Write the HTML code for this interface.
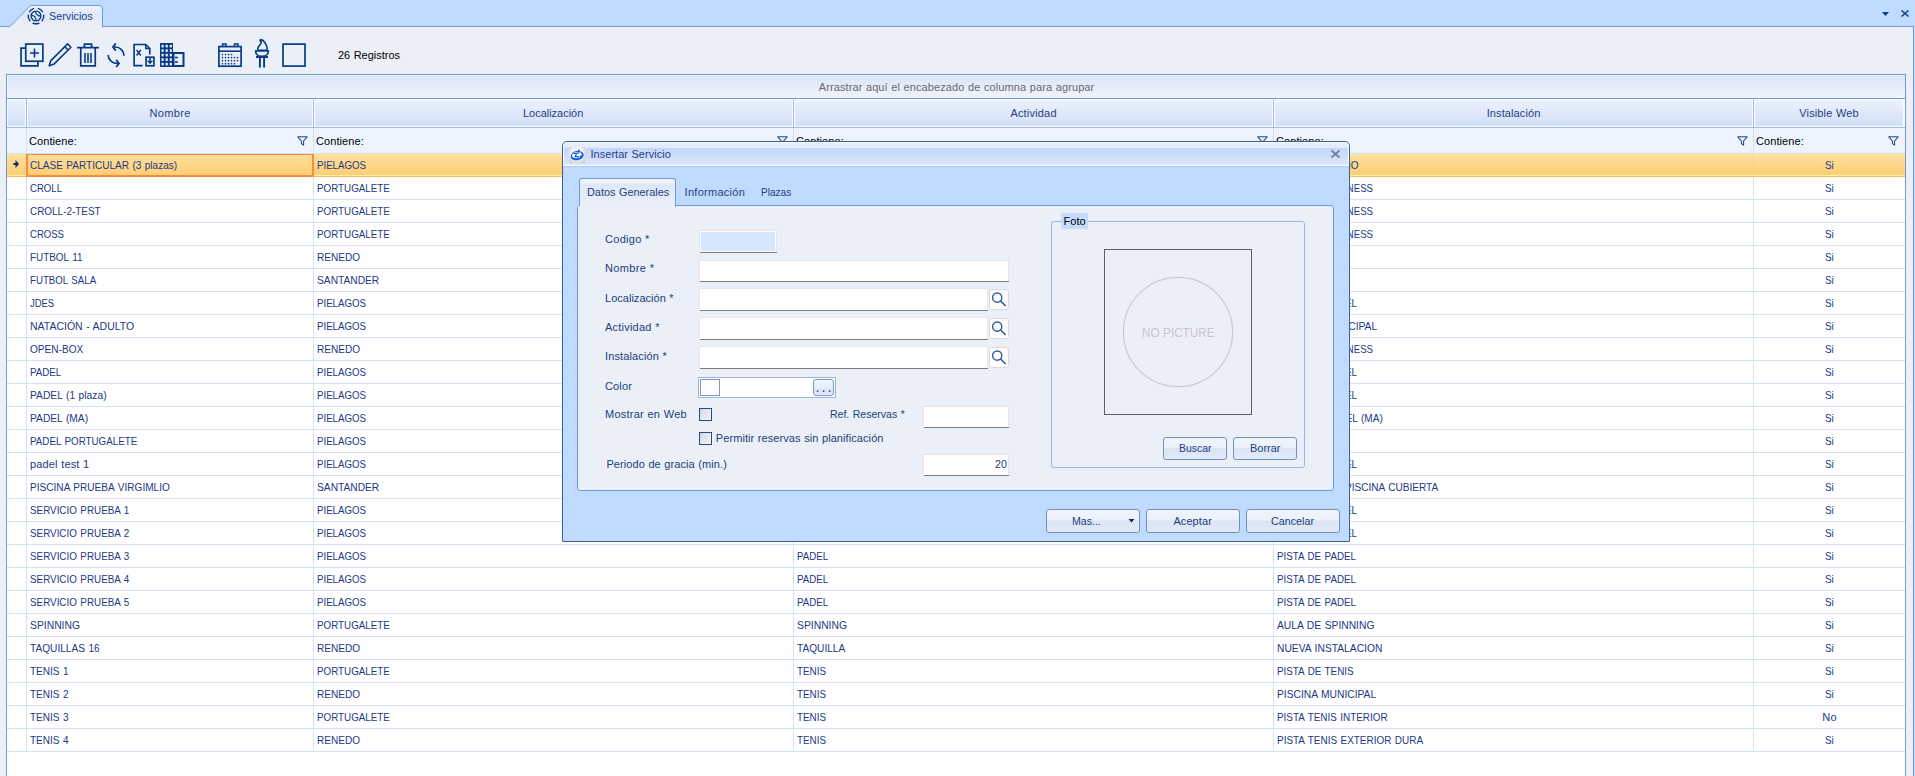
<!DOCTYPE html><html><head><meta charset="utf-8"><style>
*{margin:0;padding:0;box-sizing:border-box}
html,body{width:1915px;height:776px;overflow:hidden;background:#EBEFF8;font-family:"Liberation Sans",sans-serif;font-size:11px}
.a{position:absolute}
.t{position:absolute;white-space:nowrap;line-height:1;color:#1c3886}
.k{color:#000}
svg{position:absolute;overflow:visible}
</style></head><body>
<div class="a" style="left:0;top:0;width:1915px;height:26px;background:#BFDBFF"></div>
<div class="a" style="left:0;top:26px;width:1915px;height:1px;background:#6E9AD6"></div>
<svg style="left:0;top:0" width="120" height="30"><defs><linearGradient id="tg" x1="0" y1="0" x2="0" y2="1"><stop offset="0" stop-color="#F3F6FC"/><stop offset="0.35" stop-color="#DFE8F8"/><stop offset="1" stop-color="#EBEFF8"/></linearGradient></defs>
<path d="M9.5 27 L30.5 5.5 L99 5.5 Q102.5 5.5 102.5 9 L102.5 27 Z" fill="url(#tg)" stroke="#6E9AD6" stroke-width="1"/>
<rect x="10" y="26" width="92" height="2" fill="#EBEFF8"/></svg>
<svg style="left:0;top:0" width="60" height="30">
<path d="M38.92 23.23 A7.8 7.8 0 0 1 33.08 23.23 M29.85 20.80 A7.8 7.8 0 0 1 28.24 15.18 M29.53 11.64 A7.8 7.8 0 0 1 33.59 8.58 M38.41 8.58 A7.8 7.8 0 0 1 42.47 11.64 M43.76 15.18 A7.8 7.8 0 0 1 42.15 20.80" fill="none" stroke="#0D3C84" stroke-width="1.4" stroke-linecap="round"/>
<circle cx="36" cy="16" r="4.9" fill="none" stroke="#0D3C84" stroke-width="1.4"/>
<path d="M35.3 11.3 C35.8 14 37.5 15.6 40.6 16.2 M31.4 15.2 C34 15.6 35.9 17.6 36.3 20.7" fill="none" stroke="#0D3C84" stroke-width="1.2"/></svg>
<div class="t " style="left:49.3px;top:11px;letter-spacing:0.000px;word-spacing:0.514px;transform:scaleX(0.9803);transform-origin:0 0;color:#123F8E;">Servicios</div>
<svg style="left:1881px;top:11px" width="10" height="8"><path d="M1 1 L8 1 L4.5 5 Z" fill="#0D3C84"/></svg>
<svg style="left:1900px;top:9px" width="12" height="10"><path d="M1.5 1.5 L8.5 7.5 M8.5 1.5 L1.5 7.5" stroke="#0D3C84" stroke-width="1.6"/></svg>
<div class="a" style="left:1913px;top:26px;width:1px;height:750px;background:#6E9AD6"></div>
<div class="a" style="left:1914px;top:26px;width:1px;height:750px;background:#BFDBFF"></div>
<svg style="left:0;top:0" width="320" height="72" fill="none" stroke="#083B82" stroke-width="2">
<path d="M25.5 48.2 H21.05 V65.85 H37.9 V62" stroke-width="1.7"/>
<rect x="25.75" y="44.05" width="17.1" height="17.2" stroke-width="1.7"/>
<path d="M30 53 H39 M34.5 48.5 V57.5" stroke-width="1.6"/>
<path d="M49.2 65.8 L50.9 60.6 L67.6 43.9 L70.9 47.2 L54.2 63.9 Z M64.8 46.7 L68.1 50" stroke-width="1.6" stroke-linejoin="round"/>
<path d="M77 47.6 H99 M84.4 47.6 V44.1 H91.6 V47.6 M80.75 47.6 V65.85 H95.25 V47.6" stroke-width="1.7"/>
<path d="M85 53 V63 M88 53 V63 M91 53 V63" stroke-width="1.6"/>
<path d="M113.8 47 H115.3 A8.7 8.7 0 0 1 124 55.7" stroke-width="1.7"/>
<path d="M115.8 43.4 L113 47 L115.8 50.6" stroke-width="1.8"/>
<path d="M108.2 55.1 A8.5 8.5 0 0 0 116.7 63.4 H118.2" stroke-width="1.7"/>
<path d="M116.2 59.8 L119 63.4 L116.2 67" stroke-width="1.8"/>
<path d="M142.7 65.7 H134.1 V44.5 H145.8 L149.8 48.5 V54.4" stroke-width="1.7"/>
<path d="M145.8 44.4 V48.6 H150" stroke-width="1.5"/>
<path d="M136.6 50 L140.8 55.5 M140.8 50 L136.6 55.5" stroke-width="1.5"/>
<rect x="146.1" y="57.2" width="7.8" height="8.6" stroke-width="1.7"/>
<path d="M150 58 V61.5" stroke-width="1.6"/>
<path d="M146.9 60.8 H153.1 L150 64.2 Z" fill="#083B82" stroke="none"/>
<rect x="173.5" y="53" width="10" height="13"/>
<path d="M175 57.5 H178 M175 62 H178" stroke-width="1.4"/>
<rect x="218.9" y="46.6" width="22.2" height="19.6" stroke-width="1.7"/>
<path d="M219 51.2 H241" stroke-width="1.6"/>
<path d="M222.5 46 V44 H226 V46 M234.5 46 V44 H238 V46" stroke-width="1.5"/>
<rect x="283" y="44.1" width="22" height="22" stroke-width="1.7"/>
</svg>
<svg style="left:0;top:0" width="200" height="72"><rect x="160" y="43" width="13" height="24" fill="#083B82"/><rect x="161.5" y="44.8" width="2.2" height="2.6" fill="#EBEFF8"/><rect x="165.6" y="44.8" width="2.2" height="2.6" fill="#EBEFF8"/><rect x="169.7" y="44.8" width="2.2" height="2.6" fill="#EBEFF8"/><rect x="161.5" y="49.3" width="2.2" height="2.6" fill="#EBEFF8"/><rect x="165.6" y="49.3" width="2.2" height="2.6" fill="#EBEFF8"/><rect x="169.7" y="49.3" width="2.2" height="2.6" fill="#EBEFF8"/><rect x="161.5" y="53.8" width="2.2" height="2.6" fill="#EBEFF8"/><rect x="165.6" y="53.8" width="2.2" height="2.6" fill="#EBEFF8"/><rect x="169.7" y="53.8" width="2.2" height="2.6" fill="#EBEFF8"/><rect x="161.5" y="58.3" width="2.2" height="2.6" fill="#EBEFF8"/><rect x="165.6" y="58.3" width="2.2" height="2.6" fill="#EBEFF8"/><rect x="169.7" y="58.3" width="2.2" height="2.6" fill="#EBEFF8"/><rect x="161.5" y="62.8" width="2.2" height="2.6" fill="#EBEFF8"/><rect x="165.6" y="62.8" width="2.2" height="2.6" fill="#EBEFF8"/><rect x="169.7" y="62.8" width="2.2" height="2.6" fill="#EBEFF8"/></svg>
<svg style="left:0;top:0" width="260" height="72"><circle cx="222.5" cy="54.50" r="0.85" fill="#083B82"/><circle cx="225.5" cy="54.50" r="0.85" fill="#083B82"/><circle cx="228.5" cy="54.50" r="0.85" fill="#083B82"/><circle cx="231.5" cy="54.50" r="0.85" fill="#083B82"/><circle cx="222.5" cy="57.55" r="0.85" fill="#083B82"/><circle cx="225.5" cy="57.55" r="0.85" fill="#083B82"/><circle cx="228.5" cy="57.55" r="0.85" fill="#083B82"/><circle cx="231.5" cy="57.55" r="0.85" fill="#083B82"/><circle cx="234.5" cy="57.55" r="0.85" fill="#083B82"/><circle cx="237.5" cy="57.55" r="0.85" fill="#083B82"/><circle cx="222.5" cy="60.60" r="0.85" fill="#083B82"/><circle cx="225.5" cy="60.60" r="0.85" fill="#083B82"/><circle cx="228.5" cy="60.60" r="0.85" fill="#083B82"/><circle cx="231.5" cy="60.60" r="0.85" fill="#083B82"/><circle cx="234.5" cy="60.60" r="0.85" fill="#083B82"/><circle cx="237.5" cy="60.60" r="0.85" fill="#083B82"/><circle cx="222.5" cy="63.65" r="0.85" fill="#083B82"/><circle cx="225.5" cy="63.65" r="0.85" fill="#083B82"/><circle cx="228.5" cy="63.65" r="0.85" fill="#083B82"/><circle cx="231.5" cy="63.65" r="0.85" fill="#083B82"/><circle cx="234.5" cy="63.65" r="0.85" fill="#083B82"/></svg>
<svg style="left:0;top:0" width="300" height="72" fill="none" stroke="#083B82" stroke-width="1.6">
<path d="M260.5 39.6 C263.5 39.5 267.3 44.5 267.3 50.3 L257.5 50.3 C257.5 46.5 259.5 45.3 260.8 43.8 C261.5 43 261 41.5 260 40.3 Z" stroke-linejoin="round"/>
<path d="M255.6 51 H268.4 C268.4 54.3 265.6 56.4 262 56.4 C258.4 56.4 255.6 54.3 255.6 51 Z" stroke-width="1.7"/>
<path d="M256 57 H268" stroke-width="2"/>
<path d="M259.9 58 V67.6 M264.1 58 V67.6" stroke-width="1.9"/>
</svg>
<div class="t k" style="left:338px;top:50px;letter-spacing:0.000px;word-spacing:0.454px;transform:scaleX(0.9972);transform-origin:0 0;">26 Registros</div>
<div class="a" style="left:6px;top:74px;width:1900px;height:702px;border:1px solid #6E9AD6;border-bottom:none;background:#fff"></div>
<div class="a" style="left:7px;top:75px;width:1898px;height:23px;background:linear-gradient(#DCE6FA,#EFF3FC);border-top:1px solid #F3F6FD;border-left:1px solid #F7F9FE"></div>
<div class="a" style="left:7px;top:98px;width:1898px;height:1px;background:#6E9AD6"></div>
<div class="t " style="left:818.7px;top:82px;letter-spacing:0.105px;word-spacing:0.339px;color:#6A6A6A;">Arrastrar aquí el encabezado de columna para agrupar</div>
<div class="a" style="left:7px;top:99px;width:19px;height:28px;background:linear-gradient(#EBF1FD,#D2E0F6);border:1px solid #FAFCFF"></div>
<div class="a" style="left:26px;top:99px;width:1px;height:28px;background:#A4BCDB"></div>
<div class="a" style="left:27px;top:99px;width:286px;height:28px;background:linear-gradient(#EBF1FD,#D2E0F6);border:1px solid #FAFCFF"></div>
<div class="a" style="left:313px;top:99px;width:1px;height:28px;background:#A4BCDB"></div>
<div class="a" style="left:314px;top:99px;width:479px;height:28px;background:linear-gradient(#EBF1FD,#D2E0F6);border:1px solid #FAFCFF"></div>
<div class="a" style="left:793px;top:99px;width:1px;height:28px;background:#A4BCDB"></div>
<div class="a" style="left:794px;top:99px;width:479px;height:28px;background:linear-gradient(#EBF1FD,#D2E0F6);border:1px solid #FAFCFF"></div>
<div class="a" style="left:1273px;top:99px;width:1px;height:28px;background:#A4BCDB"></div>
<div class="a" style="left:1274px;top:99px;width:479px;height:28px;background:linear-gradient(#EBF1FD,#D2E0F6);border:1px solid #FAFCFF"></div>
<div class="a" style="left:1753px;top:99px;width:1px;height:28px;background:#A4BCDB"></div>
<div class="a" style="left:1754px;top:99px;width:150px;height:28px;background:linear-gradient(#EBF1FD,#D2E0F6);border:1px solid #FAFCFF"></div>
<div class="a" style="left:7px;top:127px;width:1898px;height:1px;background:#A4BCDB"></div>
<div class="t " style="left:149.6px;top:108px;letter-spacing:0.323px;word-spacing:0.121px;color:#243F7E;">Nombre</div>
<div class="t " style="left:523.4px;top:108px;letter-spacing:0.000px;word-spacing:0.459px;transform:scaleX(0.9957);transform-origin:0 0;color:#243F7E;">Localización</div>
<div class="t " style="left:1010.4px;top:108px;letter-spacing:0.189px;word-spacing:0.255px;color:#243F7E;">Actividad</div>
<div class="t " style="left:1486.7px;top:108px;letter-spacing:0.100px;word-spacing:0.344px;color:#243F7E;">Instalación</div>
<div class="t " style="left:1799.3px;top:108px;letter-spacing:0.131px;word-spacing:0.312px;color:#243F7E;">Visible Web</div>
<div class="a" style="left:7px;top:128px;width:1898px;height:25px;background:#EDF4FE"></div>
<div class="a" style="left:7px;top:153px;width:1898px;height:1px;background:#D3E0F6"></div>
<div class="a" style="left:26px;top:128px;width:1px;height:25px;background:#D3E0F6"></div>
<div class="a" style="left:313px;top:128px;width:1px;height:25px;background:#D3E0F6"></div>
<div class="a" style="left:793px;top:128px;width:1px;height:25px;background:#D3E0F6"></div>
<div class="a" style="left:1273px;top:128px;width:1px;height:25px;background:#D3E0F6"></div>
<div class="a" style="left:1753px;top:128px;width:1px;height:25px;background:#D3E0F6"></div>
<div class="t k" style="left:29px;top:136px;letter-spacing:0.083px;word-spacing:0.361px;">Contiene:</div>
<svg style="left:297px;top:136px" width="12" height="11"><path d="M0.8 0.8 H10.2 L6.6 5 V9.2 L4.4 7.6 V5 Z" fill="#E2ECFB" stroke="#2E4A7C" stroke-width="1.05" stroke-linejoin="round"/></svg>
<div class="t k" style="left:316px;top:136px;letter-spacing:0.083px;word-spacing:0.361px;">Contiene:</div>
<svg style="left:777px;top:136px" width="12" height="11"><path d="M0.8 0.8 H10.2 L6.6 5 V9.2 L4.4 7.6 V5 Z" fill="#E2ECFB" stroke="#2E4A7C" stroke-width="1.05" stroke-linejoin="round"/></svg>
<div class="t k" style="left:796px;top:136px;letter-spacing:0.083px;word-spacing:0.361px;">Contiene:</div>
<svg style="left:1257px;top:136px" width="12" height="11"><path d="M0.8 0.8 H10.2 L6.6 5 V9.2 L4.4 7.6 V5 Z" fill="#E2ECFB" stroke="#2E4A7C" stroke-width="1.05" stroke-linejoin="round"/></svg>
<div class="t k" style="left:1276px;top:136px;letter-spacing:0.083px;word-spacing:0.361px;">Contiene:</div>
<svg style="left:1737px;top:136px" width="12" height="11"><path d="M0.8 0.8 H10.2 L6.6 5 V9.2 L4.4 7.6 V5 Z" fill="#E2ECFB" stroke="#2E4A7C" stroke-width="1.05" stroke-linejoin="round"/></svg>
<div class="t k" style="left:1756px;top:136px;letter-spacing:0.083px;word-spacing:0.361px;">Contiene:</div>
<svg style="left:1888px;top:136px" width="12" height="11"><path d="M0.8 0.8 H10.2 L6.6 5 V9.2 L4.4 7.6 V5 Z" fill="#E2ECFB" stroke="#2E4A7C" stroke-width="1.05" stroke-linejoin="round"/></svg>
<div class="a" style="left:7px;top:154px;width:1898px;height:23px;background:linear-gradient(#FFF3A0 0,#FEE09C 1px,#FECE74 21px,#FFF0A0 21px,#FFF0A0 22px,#FFB86A 22px)"></div>
<div class="a" style="left:26px;top:154px;width:1px;height:22px;background:#F2D49A"></div>
<div class="a" style="left:313px;top:154px;width:1px;height:22px;background:#F2D49A"></div>
<div class="a" style="left:793px;top:154px;width:1px;height:22px;background:#F2D49A"></div>
<div class="a" style="left:1273px;top:154px;width:1px;height:22px;background:#F2D49A"></div>
<div class="a" style="left:1753px;top:154px;width:1px;height:22px;background:#F2D49A"></div>
<div class="t " style="left:30px;top:160px;letter-spacing:0.000px;word-spacing:0.786px;transform:scaleX(0.9108);transform-origin:0 0;">CLASE PARTICULAR (3 plazas)</div>
<div class="t " style="left:317px;top:160px;letter-spacing:0.000px;word-spacing:0.918px;transform:scaleX(0.8807);transform-origin:0 0;">PIELAGOS</div>
<div class="t " style="left:797px;top:160px;letter-spacing:0.000px;word-spacing:0.881px;transform:scaleX(0.8889);transform-origin:0 0;">CLASE PARTICULAR</div>
<div class="t " style="left:1267.6px;top:160px;letter-spacing:0.000px;word-spacing:0.790px;transform:scaleX(0.9100);transform-origin:0 0;">SALA DE ESTUDIO</div>
<div class="t " style="left:1825.1px;top:160px;letter-spacing:0.000px;word-spacing:0.836px;transform:scaleX(0.8992);transform-origin:0 0;">Si</div>
<div class="a" style="left:7px;top:199px;width:1898px;height:1px;background:#D5E2F6"></div>
<div class="a" style="left:26px;top:177px;width:1px;height:22px;background:#D5E2F6"></div>
<div class="a" style="left:313px;top:177px;width:1px;height:22px;background:#D5E2F6"></div>
<div class="a" style="left:793px;top:177px;width:1px;height:22px;background:#D5E2F6"></div>
<div class="a" style="left:1273px;top:177px;width:1px;height:22px;background:#D5E2F6"></div>
<div class="a" style="left:1753px;top:177px;width:1px;height:22px;background:#D5E2F6"></div>
<div class="t " style="left:30px;top:183px;letter-spacing:0.000px;word-spacing:0.955px;transform:scaleX(0.8725);transform-origin:0 0;">CROLL</div>
<div class="t " style="left:317px;top:183px;letter-spacing:0.000px;word-spacing:0.871px;transform:scaleX(0.8913);transform-origin:0 0;">PORTUGALETE</div>
<div class="t " style="left:797px;top:183px;letter-spacing:0.000px;word-spacing:0.628px;transform:scaleX(0.9501);transform-origin:0 0;">NATACION</div>
<div class="t " style="left:1304.6px;top:183px;letter-spacing:0.000px;word-spacing:0.960px;transform:scaleX(0.8716);transform-origin:0 0;">SALA FITNESS</div>
<div class="t " style="left:1825.1px;top:183px;letter-spacing:0.000px;word-spacing:0.836px;transform:scaleX(0.8992);transform-origin:0 0;">Si</div>
<div class="a" style="left:7px;top:222px;width:1898px;height:1px;background:#D5E2F6"></div>
<div class="a" style="left:26px;top:200px;width:1px;height:22px;background:#D5E2F6"></div>
<div class="a" style="left:313px;top:200px;width:1px;height:22px;background:#D5E2F6"></div>
<div class="a" style="left:793px;top:200px;width:1px;height:22px;background:#D5E2F6"></div>
<div class="a" style="left:1273px;top:200px;width:1px;height:22px;background:#D5E2F6"></div>
<div class="a" style="left:1753px;top:200px;width:1px;height:22px;background:#D5E2F6"></div>
<div class="t " style="left:30px;top:206px;letter-spacing:0.000px;word-spacing:0.819px;transform:scaleX(0.9032);transform-origin:0 0;">CROLL-2-TEST</div>
<div class="t " style="left:317px;top:206px;letter-spacing:0.000px;word-spacing:0.871px;transform:scaleX(0.8913);transform-origin:0 0;">PORTUGALETE</div>
<div class="t " style="left:797px;top:206px;letter-spacing:0.000px;word-spacing:0.628px;transform:scaleX(0.9501);transform-origin:0 0;">NATACION</div>
<div class="t " style="left:1304.6px;top:206px;letter-spacing:0.000px;word-spacing:0.960px;transform:scaleX(0.8716);transform-origin:0 0;">SALA FITNESS</div>
<div class="t " style="left:1825.1px;top:206px;letter-spacing:0.000px;word-spacing:0.836px;transform:scaleX(0.8992);transform-origin:0 0;">Si</div>
<div class="a" style="left:7px;top:245px;width:1898px;height:1px;background:#D5E2F6"></div>
<div class="a" style="left:26px;top:223px;width:1px;height:22px;background:#D5E2F6"></div>
<div class="a" style="left:313px;top:223px;width:1px;height:22px;background:#D5E2F6"></div>
<div class="a" style="left:793px;top:223px;width:1px;height:22px;background:#D5E2F6"></div>
<div class="a" style="left:1273px;top:223px;width:1px;height:22px;background:#D5E2F6"></div>
<div class="a" style="left:1753px;top:223px;width:1px;height:22px;background:#D5E2F6"></div>
<div class="t " style="left:30px;top:229px;letter-spacing:0.000px;word-spacing:0.971px;transform:scaleX(0.8691);transform-origin:0 0;">CROSS</div>
<div class="t " style="left:317px;top:229px;letter-spacing:0.000px;word-spacing:0.871px;transform:scaleX(0.8913);transform-origin:0 0;">PORTUGALETE</div>
<div class="t " style="left:797px;top:229px;letter-spacing:0.000px;word-spacing:0.971px;transform:scaleX(0.8691);transform-origin:0 0;">CROSS</div>
<div class="t " style="left:1304.6px;top:229px;letter-spacing:0.000px;word-spacing:0.960px;transform:scaleX(0.8716);transform-origin:0 0;">SALA FITNESS</div>
<div class="t " style="left:1825.1px;top:229px;letter-spacing:0.000px;word-spacing:0.836px;transform:scaleX(0.8992);transform-origin:0 0;">Si</div>
<div class="a" style="left:7px;top:268px;width:1898px;height:1px;background:#D5E2F6"></div>
<div class="a" style="left:26px;top:246px;width:1px;height:22px;background:#D5E2F6"></div>
<div class="a" style="left:313px;top:246px;width:1px;height:22px;background:#D5E2F6"></div>
<div class="a" style="left:793px;top:246px;width:1px;height:22px;background:#D5E2F6"></div>
<div class="a" style="left:1273px;top:246px;width:1px;height:22px;background:#D5E2F6"></div>
<div class="a" style="left:1753px;top:246px;width:1px;height:22px;background:#D5E2F6"></div>
<div class="t " style="left:30px;top:252px;letter-spacing:0.000px;word-spacing:0.838px;transform:scaleX(0.8989);transform-origin:0 0;">FUTBOL 11</div>
<div class="t " style="left:317px;top:252px;letter-spacing:0.000px;word-spacing:0.774px;transform:scaleX(0.9137);transform-origin:0 0;">RENEDO</div>
<div class="t " style="left:797px;top:252px;letter-spacing:0.000px;word-spacing:0.940px;transform:scaleX(0.8757);transform-origin:0 0;">FUTBOL</div>
<div class="t " style="left:1277px;top:252px;letter-spacing:0.000px;word-spacing:0.659px;transform:scaleX(0.9421);transform-origin:0 0;">CAMPO</div>
<div class="t " style="left:1825.1px;top:252px;letter-spacing:0.000px;word-spacing:0.836px;transform:scaleX(0.8992);transform-origin:0 0;">Si</div>
<div class="a" style="left:7px;top:291px;width:1898px;height:1px;background:#D5E2F6"></div>
<div class="a" style="left:26px;top:269px;width:1px;height:22px;background:#D5E2F6"></div>
<div class="a" style="left:313px;top:269px;width:1px;height:22px;background:#D5E2F6"></div>
<div class="a" style="left:793px;top:269px;width:1px;height:22px;background:#D5E2F6"></div>
<div class="a" style="left:1273px;top:269px;width:1px;height:22px;background:#D5E2F6"></div>
<div class="a" style="left:1753px;top:269px;width:1px;height:22px;background:#D5E2F6"></div>
<div class="t " style="left:30px;top:275px;letter-spacing:0.000px;word-spacing:0.917px;transform:scaleX(0.8808);transform-origin:0 0;">FUTBOL SALA</div>
<div class="t " style="left:317px;top:275px;letter-spacing:0.000px;word-spacing:0.713px;transform:scaleX(0.9286);transform-origin:0 0;">SANTANDER</div>
<div class="t " style="left:797px;top:275px;letter-spacing:0.000px;word-spacing:0.940px;transform:scaleX(0.8757);transform-origin:0 0;">FUTBOL</div>
<div class="t " style="left:1277px;top:275px;letter-spacing:-0.148px;word-spacing:1.161px;transform:scaleX(0.8600);transform-origin:0 0;">PABELL</div>
<div class="t " style="left:1825.1px;top:275px;letter-spacing:0.000px;word-spacing:0.836px;transform:scaleX(0.8992);transform-origin:0 0;">Si</div>
<div class="a" style="left:7px;top:314px;width:1898px;height:1px;background:#D5E2F6"></div>
<div class="a" style="left:26px;top:292px;width:1px;height:22px;background:#D5E2F6"></div>
<div class="a" style="left:313px;top:292px;width:1px;height:22px;background:#D5E2F6"></div>
<div class="a" style="left:793px;top:292px;width:1px;height:22px;background:#D5E2F6"></div>
<div class="a" style="left:1273px;top:292px;width:1px;height:22px;background:#D5E2F6"></div>
<div class="a" style="left:1753px;top:292px;width:1px;height:22px;background:#D5E2F6"></div>
<div class="t " style="left:30px;top:298px;letter-spacing:-0.053px;word-spacing:1.066px;transform:scaleX(0.8600);transform-origin:0 0;">JDES</div>
<div class="t " style="left:317px;top:298px;letter-spacing:0.000px;word-spacing:0.918px;transform:scaleX(0.8807);transform-origin:0 0;">PIELAGOS</div>
<div class="t " style="left:797px;top:298px;letter-spacing:0.000px;word-spacing:0.889px;transform:scaleX(0.8871);transform-origin:0 0;">PADEL</div>
<div class="t " style="left:1278.0px;top:298px;letter-spacing:0.000px;word-spacing:0.876px;transform:scaleX(0.8900);transform-origin:0 0;">PISTA DE PADEL</div>
<div class="t " style="left:1825.1px;top:298px;letter-spacing:0.000px;word-spacing:0.836px;transform:scaleX(0.8992);transform-origin:0 0;">Si</div>
<div class="a" style="left:7px;top:337px;width:1898px;height:1px;background:#D5E2F6"></div>
<div class="a" style="left:26px;top:315px;width:1px;height:22px;background:#D5E2F6"></div>
<div class="a" style="left:313px;top:315px;width:1px;height:22px;background:#D5E2F6"></div>
<div class="a" style="left:793px;top:315px;width:1px;height:22px;background:#D5E2F6"></div>
<div class="a" style="left:1273px;top:315px;width:1px;height:22px;background:#D5E2F6"></div>
<div class="a" style="left:1753px;top:315px;width:1px;height:22px;background:#D5E2F6"></div>
<div class="t " style="left:30px;top:321px;letter-spacing:0.000px;word-spacing:0.611px;transform:scaleX(0.9545);transform-origin:0 0;">NATACIÓN - ADULTO</div>
<div class="t " style="left:317px;top:321px;letter-spacing:0.000px;word-spacing:0.918px;transform:scaleX(0.8807);transform-origin:0 0;">PIELAGOS</div>
<div class="t " style="left:797px;top:321px;letter-spacing:0.000px;word-spacing:0.628px;transform:scaleX(0.9501);transform-origin:0 0;">NATACION</div>
<div class="t " style="left:1277.8px;top:321px;letter-spacing:0.000px;word-spacing:0.693px;transform:scaleX(0.9335);transform-origin:0 0;">PISCINA MUNICIPAL</div>
<div class="t " style="left:1825.1px;top:321px;letter-spacing:0.000px;word-spacing:0.836px;transform:scaleX(0.8992);transform-origin:0 0;">Si</div>
<div class="a" style="left:7px;top:360px;width:1898px;height:1px;background:#D5E2F6"></div>
<div class="a" style="left:26px;top:338px;width:1px;height:22px;background:#D5E2F6"></div>
<div class="a" style="left:313px;top:338px;width:1px;height:22px;background:#D5E2F6"></div>
<div class="a" style="left:793px;top:338px;width:1px;height:22px;background:#D5E2F6"></div>
<div class="a" style="left:1273px;top:338px;width:1px;height:22px;background:#D5E2F6"></div>
<div class="a" style="left:1753px;top:338px;width:1px;height:22px;background:#D5E2F6"></div>
<div class="t " style="left:30px;top:344px;letter-spacing:0.000px;word-spacing:0.755px;transform:scaleX(0.9184);transform-origin:0 0;">OPEN-BOX</div>
<div class="t " style="left:317px;top:344px;letter-spacing:0.000px;word-spacing:0.774px;transform:scaleX(0.9137);transform-origin:0 0;">RENEDO</div>
<div class="t " style="left:797px;top:344px;letter-spacing:0.000px;word-spacing:0.971px;transform:scaleX(0.8691);transform-origin:0 0;">CROSS</div>
<div class="t " style="left:1304.6px;top:344px;letter-spacing:0.000px;word-spacing:0.960px;transform:scaleX(0.8716);transform-origin:0 0;">SALA FITNESS</div>
<div class="t " style="left:1825.1px;top:344px;letter-spacing:0.000px;word-spacing:0.836px;transform:scaleX(0.8992);transform-origin:0 0;">Si</div>
<div class="a" style="left:7px;top:383px;width:1898px;height:1px;background:#D5E2F6"></div>
<div class="a" style="left:26px;top:361px;width:1px;height:22px;background:#D5E2F6"></div>
<div class="a" style="left:313px;top:361px;width:1px;height:22px;background:#D5E2F6"></div>
<div class="a" style="left:793px;top:361px;width:1px;height:22px;background:#D5E2F6"></div>
<div class="a" style="left:1273px;top:361px;width:1px;height:22px;background:#D5E2F6"></div>
<div class="a" style="left:1753px;top:361px;width:1px;height:22px;background:#D5E2F6"></div>
<div class="t " style="left:30px;top:367px;letter-spacing:0.000px;word-spacing:0.889px;transform:scaleX(0.8871);transform-origin:0 0;">PADEL</div>
<div class="t " style="left:317px;top:367px;letter-spacing:0.000px;word-spacing:0.918px;transform:scaleX(0.8807);transform-origin:0 0;">PIELAGOS</div>
<div class="t " style="left:797px;top:367px;letter-spacing:0.000px;word-spacing:0.889px;transform:scaleX(0.8871);transform-origin:0 0;">PADEL</div>
<div class="t " style="left:1278.0px;top:367px;letter-spacing:0.000px;word-spacing:0.876px;transform:scaleX(0.8900);transform-origin:0 0;">PISTA DE PADEL</div>
<div class="t " style="left:1825.1px;top:367px;letter-spacing:0.000px;word-spacing:0.836px;transform:scaleX(0.8992);transform-origin:0 0;">Si</div>
<div class="a" style="left:7px;top:406px;width:1898px;height:1px;background:#D5E2F6"></div>
<div class="a" style="left:26px;top:384px;width:1px;height:22px;background:#D5E2F6"></div>
<div class="a" style="left:313px;top:384px;width:1px;height:22px;background:#D5E2F6"></div>
<div class="a" style="left:793px;top:384px;width:1px;height:22px;background:#D5E2F6"></div>
<div class="a" style="left:1273px;top:384px;width:1px;height:22px;background:#D5E2F6"></div>
<div class="a" style="left:1753px;top:384px;width:1px;height:22px;background:#D5E2F6"></div>
<div class="t " style="left:30px;top:390px;letter-spacing:0.000px;word-spacing:0.697px;transform:scaleX(0.9325);transform-origin:0 0;">PADEL (1 plaza)</div>
<div class="t " style="left:317px;top:390px;letter-spacing:0.000px;word-spacing:0.918px;transform:scaleX(0.8807);transform-origin:0 0;">PIELAGOS</div>
<div class="t " style="left:797px;top:390px;letter-spacing:0.000px;word-spacing:0.889px;transform:scaleX(0.8871);transform-origin:0 0;">PADEL</div>
<div class="t " style="left:1278.0px;top:390px;letter-spacing:0.000px;word-spacing:0.876px;transform:scaleX(0.8900);transform-origin:0 0;">PISTA DE PADEL</div>
<div class="t " style="left:1825.1px;top:390px;letter-spacing:0.000px;word-spacing:0.836px;transform:scaleX(0.8992);transform-origin:0 0;">Si</div>
<div class="a" style="left:7px;top:429px;width:1898px;height:1px;background:#D5E2F6"></div>
<div class="a" style="left:26px;top:407px;width:1px;height:22px;background:#D5E2F6"></div>
<div class="a" style="left:313px;top:407px;width:1px;height:22px;background:#D5E2F6"></div>
<div class="a" style="left:793px;top:407px;width:1px;height:22px;background:#D5E2F6"></div>
<div class="a" style="left:1273px;top:407px;width:1px;height:22px;background:#D5E2F6"></div>
<div class="a" style="left:1753px;top:407px;width:1px;height:22px;background:#D5E2F6"></div>
<div class="t " style="left:30px;top:413px;letter-spacing:0.000px;word-spacing:0.710px;transform:scaleX(0.9294);transform-origin:0 0;">PADEL (MA)</div>
<div class="t " style="left:317px;top:413px;letter-spacing:0.000px;word-spacing:0.918px;transform:scaleX(0.8807);transform-origin:0 0;">PIELAGOS</div>
<div class="t " style="left:797px;top:413px;letter-spacing:0.000px;word-spacing:0.889px;transform:scaleX(0.8871);transform-origin:0 0;">PADEL</div>
<div class="t " style="left:1277.2px;top:413px;letter-spacing:0.000px;word-spacing:0.777px;transform:scaleX(0.9131);transform-origin:0 0;">PISTA DE PADEL (MA)</div>
<div class="t " style="left:1825.1px;top:413px;letter-spacing:0.000px;word-spacing:0.836px;transform:scaleX(0.8992);transform-origin:0 0;">Si</div>
<div class="a" style="left:7px;top:452px;width:1898px;height:1px;background:#D5E2F6"></div>
<div class="a" style="left:26px;top:430px;width:1px;height:22px;background:#D5E2F6"></div>
<div class="a" style="left:313px;top:430px;width:1px;height:22px;background:#D5E2F6"></div>
<div class="a" style="left:793px;top:430px;width:1px;height:22px;background:#D5E2F6"></div>
<div class="a" style="left:1273px;top:430px;width:1px;height:22px;background:#D5E2F6"></div>
<div class="a" style="left:1753px;top:430px;width:1px;height:22px;background:#D5E2F6"></div>
<div class="t " style="left:30px;top:436px;letter-spacing:0.000px;word-spacing:0.876px;transform:scaleX(0.8900);transform-origin:0 0;">PADEL PORTUGALETE</div>
<div class="t " style="left:317px;top:436px;letter-spacing:0.000px;word-spacing:0.918px;transform:scaleX(0.8807);transform-origin:0 0;">PIELAGOS</div>
<div class="t " style="left:797px;top:436px;letter-spacing:0.000px;word-spacing:0.889px;transform:scaleX(0.8871);transform-origin:0 0;">PADEL</div>
<div class="t " style="left:1277px;top:436px;letter-spacing:0.000px;word-spacing:0.917px;transform:scaleX(0.8808);transform-origin:0 0;">PISTA</div>
<div class="t " style="left:1825.1px;top:436px;letter-spacing:0.000px;word-spacing:0.836px;transform:scaleX(0.8992);transform-origin:0 0;">Si</div>
<div class="a" style="left:7px;top:475px;width:1898px;height:1px;background:#D5E2F6"></div>
<div class="a" style="left:26px;top:453px;width:1px;height:22px;background:#D5E2F6"></div>
<div class="a" style="left:313px;top:453px;width:1px;height:22px;background:#D5E2F6"></div>
<div class="a" style="left:793px;top:453px;width:1px;height:22px;background:#D5E2F6"></div>
<div class="a" style="left:1273px;top:453px;width:1px;height:22px;background:#D5E2F6"></div>
<div class="a" style="left:1753px;top:453px;width:1px;height:22px;background:#D5E2F6"></div>
<div class="t " style="left:30px;top:459px;letter-spacing:0.152px;word-spacing:0.292px;">padel test 1</div>
<div class="t " style="left:317px;top:459px;letter-spacing:0.000px;word-spacing:0.918px;transform:scaleX(0.8807);transform-origin:0 0;">PIELAGOS</div>
<div class="t " style="left:797px;top:459px;letter-spacing:0.000px;word-spacing:0.889px;transform:scaleX(0.8871);transform-origin:0 0;">PADEL</div>
<div class="t " style="left:1278.0px;top:459px;letter-spacing:0.000px;word-spacing:0.876px;transform:scaleX(0.8900);transform-origin:0 0;">PISTA DE PADEL</div>
<div class="t " style="left:1825.1px;top:459px;letter-spacing:0.000px;word-spacing:0.836px;transform:scaleX(0.8992);transform-origin:0 0;">Si</div>
<div class="a" style="left:7px;top:498px;width:1898px;height:1px;background:#D5E2F6"></div>
<div class="a" style="left:26px;top:476px;width:1px;height:22px;background:#D5E2F6"></div>
<div class="a" style="left:313px;top:476px;width:1px;height:22px;background:#D5E2F6"></div>
<div class="a" style="left:793px;top:476px;width:1px;height:22px;background:#D5E2F6"></div>
<div class="a" style="left:1273px;top:476px;width:1px;height:22px;background:#D5E2F6"></div>
<div class="a" style="left:1753px;top:476px;width:1px;height:22px;background:#D5E2F6"></div>
<div class="t " style="left:30px;top:482px;letter-spacing:0.000px;word-spacing:0.760px;transform:scaleX(0.9172);transform-origin:0 0;">PISCINA PRUEBA VIRGIMLIO</div>
<div class="t " style="left:317px;top:482px;letter-spacing:0.000px;word-spacing:0.713px;transform:scaleX(0.9286);transform-origin:0 0;">SANTANDER</div>
<div class="t " style="left:797px;top:482px;letter-spacing:0.000px;word-spacing:0.628px;transform:scaleX(0.9501);transform-origin:0 0;">NATACION</div>
<div class="t " style="left:1307.8px;top:482px;letter-spacing:0.000px;word-spacing:0.764px;transform:scaleX(0.9162);transform-origin:0 0;">NUEVA PISCINA CUBIERTA</div>
<div class="t " style="left:1825.1px;top:482px;letter-spacing:0.000px;word-spacing:0.836px;transform:scaleX(0.8992);transform-origin:0 0;">Si</div>
<div class="a" style="left:7px;top:521px;width:1898px;height:1px;background:#D5E2F6"></div>
<div class="a" style="left:26px;top:499px;width:1px;height:22px;background:#D5E2F6"></div>
<div class="a" style="left:313px;top:499px;width:1px;height:22px;background:#D5E2F6"></div>
<div class="a" style="left:793px;top:499px;width:1px;height:22px;background:#D5E2F6"></div>
<div class="a" style="left:1273px;top:499px;width:1px;height:22px;background:#D5E2F6"></div>
<div class="a" style="left:1753px;top:499px;width:1px;height:22px;background:#D5E2F6"></div>
<div class="t " style="left:30px;top:505px;letter-spacing:0.000px;word-spacing:0.855px;transform:scaleX(0.8949);transform-origin:0 0;">SERVICIO PRUEBA 1</div>
<div class="t " style="left:317px;top:505px;letter-spacing:0.000px;word-spacing:0.918px;transform:scaleX(0.8807);transform-origin:0 0;">PIELAGOS</div>
<div class="t " style="left:797px;top:505px;letter-spacing:0.000px;word-spacing:0.889px;transform:scaleX(0.8871);transform-origin:0 0;">PADEL</div>
<div class="t " style="left:1278.0px;top:505px;letter-spacing:0.000px;word-spacing:0.876px;transform:scaleX(0.8900);transform-origin:0 0;">PISTA DE PADEL</div>
<div class="t " style="left:1825.1px;top:505px;letter-spacing:0.000px;word-spacing:0.836px;transform:scaleX(0.8992);transform-origin:0 0;">Si</div>
<div class="a" style="left:7px;top:544px;width:1898px;height:1px;background:#D5E2F6"></div>
<div class="a" style="left:26px;top:522px;width:1px;height:22px;background:#D5E2F6"></div>
<div class="a" style="left:313px;top:522px;width:1px;height:22px;background:#D5E2F6"></div>
<div class="a" style="left:793px;top:522px;width:1px;height:22px;background:#D5E2F6"></div>
<div class="a" style="left:1273px;top:522px;width:1px;height:22px;background:#D5E2F6"></div>
<div class="a" style="left:1753px;top:522px;width:1px;height:22px;background:#D5E2F6"></div>
<div class="t " style="left:30px;top:528px;letter-spacing:0.000px;word-spacing:0.855px;transform:scaleX(0.8949);transform-origin:0 0;">SERVICIO PRUEBA 2</div>
<div class="t " style="left:317px;top:528px;letter-spacing:0.000px;word-spacing:0.918px;transform:scaleX(0.8807);transform-origin:0 0;">PIELAGOS</div>
<div class="t " style="left:797px;top:528px;letter-spacing:0.000px;word-spacing:0.889px;transform:scaleX(0.8871);transform-origin:0 0;">PADEL</div>
<div class="t " style="left:1278.0px;top:528px;letter-spacing:0.000px;word-spacing:0.876px;transform:scaleX(0.8900);transform-origin:0 0;">PISTA DE PADEL</div>
<div class="t " style="left:1825.1px;top:528px;letter-spacing:0.000px;word-spacing:0.836px;transform:scaleX(0.8992);transform-origin:0 0;">Si</div>
<div class="a" style="left:7px;top:567px;width:1898px;height:1px;background:#D5E2F6"></div>
<div class="a" style="left:26px;top:545px;width:1px;height:22px;background:#D5E2F6"></div>
<div class="a" style="left:313px;top:545px;width:1px;height:22px;background:#D5E2F6"></div>
<div class="a" style="left:793px;top:545px;width:1px;height:22px;background:#D5E2F6"></div>
<div class="a" style="left:1273px;top:545px;width:1px;height:22px;background:#D5E2F6"></div>
<div class="a" style="left:1753px;top:545px;width:1px;height:22px;background:#D5E2F6"></div>
<div class="t " style="left:30px;top:551px;letter-spacing:0.000px;word-spacing:0.855px;transform:scaleX(0.8949);transform-origin:0 0;">SERVICIO PRUEBA 3</div>
<div class="t " style="left:317px;top:551px;letter-spacing:0.000px;word-spacing:0.918px;transform:scaleX(0.8807);transform-origin:0 0;">PIELAGOS</div>
<div class="t " style="left:797px;top:551px;letter-spacing:0.000px;word-spacing:0.889px;transform:scaleX(0.8871);transform-origin:0 0;">PADEL</div>
<div class="t " style="left:1277px;top:551px;letter-spacing:0.000px;word-spacing:0.876px;transform:scaleX(0.8900);transform-origin:0 0;">PISTA DE PADEL</div>
<div class="t " style="left:1825.1px;top:551px;letter-spacing:0.000px;word-spacing:0.836px;transform:scaleX(0.8992);transform-origin:0 0;">Si</div>
<div class="a" style="left:7px;top:590px;width:1898px;height:1px;background:#D5E2F6"></div>
<div class="a" style="left:26px;top:568px;width:1px;height:22px;background:#D5E2F6"></div>
<div class="a" style="left:313px;top:568px;width:1px;height:22px;background:#D5E2F6"></div>
<div class="a" style="left:793px;top:568px;width:1px;height:22px;background:#D5E2F6"></div>
<div class="a" style="left:1273px;top:568px;width:1px;height:22px;background:#D5E2F6"></div>
<div class="a" style="left:1753px;top:568px;width:1px;height:22px;background:#D5E2F6"></div>
<div class="t " style="left:30px;top:574px;letter-spacing:0.000px;word-spacing:0.855px;transform:scaleX(0.8949);transform-origin:0 0;">SERVICIO PRUEBA 4</div>
<div class="t " style="left:317px;top:574px;letter-spacing:0.000px;word-spacing:0.918px;transform:scaleX(0.8807);transform-origin:0 0;">PIELAGOS</div>
<div class="t " style="left:797px;top:574px;letter-spacing:0.000px;word-spacing:0.889px;transform:scaleX(0.8871);transform-origin:0 0;">PADEL</div>
<div class="t " style="left:1277px;top:574px;letter-spacing:0.000px;word-spacing:0.876px;transform:scaleX(0.8900);transform-origin:0 0;">PISTA DE PADEL</div>
<div class="t " style="left:1825.1px;top:574px;letter-spacing:0.000px;word-spacing:0.836px;transform:scaleX(0.8992);transform-origin:0 0;">Si</div>
<div class="a" style="left:7px;top:613px;width:1898px;height:1px;background:#D5E2F6"></div>
<div class="a" style="left:26px;top:591px;width:1px;height:22px;background:#D5E2F6"></div>
<div class="a" style="left:313px;top:591px;width:1px;height:22px;background:#D5E2F6"></div>
<div class="a" style="left:793px;top:591px;width:1px;height:22px;background:#D5E2F6"></div>
<div class="a" style="left:1273px;top:591px;width:1px;height:22px;background:#D5E2F6"></div>
<div class="a" style="left:1753px;top:591px;width:1px;height:22px;background:#D5E2F6"></div>
<div class="t " style="left:30px;top:597px;letter-spacing:0.000px;word-spacing:0.855px;transform:scaleX(0.8949);transform-origin:0 0;">SERVICIO PRUEBA 5</div>
<div class="t " style="left:317px;top:597px;letter-spacing:0.000px;word-spacing:0.918px;transform:scaleX(0.8807);transform-origin:0 0;">PIELAGOS</div>
<div class="t " style="left:797px;top:597px;letter-spacing:0.000px;word-spacing:0.889px;transform:scaleX(0.8871);transform-origin:0 0;">PADEL</div>
<div class="t " style="left:1277px;top:597px;letter-spacing:0.000px;word-spacing:0.876px;transform:scaleX(0.8900);transform-origin:0 0;">PISTA DE PADEL</div>
<div class="t " style="left:1825.1px;top:597px;letter-spacing:0.000px;word-spacing:0.836px;transform:scaleX(0.8992);transform-origin:0 0;">Si</div>
<div class="a" style="left:7px;top:636px;width:1898px;height:1px;background:#D5E2F6"></div>
<div class="a" style="left:26px;top:614px;width:1px;height:22px;background:#D5E2F6"></div>
<div class="a" style="left:313px;top:614px;width:1px;height:22px;background:#D5E2F6"></div>
<div class="a" style="left:793px;top:614px;width:1px;height:22px;background:#D5E2F6"></div>
<div class="a" style="left:1273px;top:614px;width:1px;height:22px;background:#D5E2F6"></div>
<div class="a" style="left:1753px;top:614px;width:1px;height:22px;background:#D5E2F6"></div>
<div class="t " style="left:30px;top:620px;letter-spacing:0.000px;word-spacing:0.666px;transform:scaleX(0.9403);transform-origin:0 0;">SPINNING</div>
<div class="t " style="left:317px;top:620px;letter-spacing:0.000px;word-spacing:0.871px;transform:scaleX(0.8913);transform-origin:0 0;">PORTUGALETE</div>
<div class="t " style="left:797px;top:620px;letter-spacing:0.000px;word-spacing:0.666px;transform:scaleX(0.9403);transform-origin:0 0;">SPINNING</div>
<div class="t " style="left:1277px;top:620px;letter-spacing:0.000px;word-spacing:0.682px;transform:scaleX(0.9363);transform-origin:0 0;">AULA DE SPINNING</div>
<div class="t " style="left:1825.1px;top:620px;letter-spacing:0.000px;word-spacing:0.836px;transform:scaleX(0.8992);transform-origin:0 0;">Si</div>
<div class="a" style="left:7px;top:659px;width:1898px;height:1px;background:#D5E2F6"></div>
<div class="a" style="left:26px;top:637px;width:1px;height:22px;background:#D5E2F6"></div>
<div class="a" style="left:313px;top:637px;width:1px;height:22px;background:#D5E2F6"></div>
<div class="a" style="left:793px;top:637px;width:1px;height:22px;background:#D5E2F6"></div>
<div class="a" style="left:1273px;top:637px;width:1px;height:22px;background:#D5E2F6"></div>
<div class="a" style="left:1753px;top:637px;width:1px;height:22px;background:#D5E2F6"></div>
<div class="t " style="left:30px;top:643px;letter-spacing:0.000px;word-spacing:0.744px;transform:scaleX(0.9209);transform-origin:0 0;">TAQUILLAS 16</div>
<div class="t " style="left:317px;top:643px;letter-spacing:0.000px;word-spacing:0.774px;transform:scaleX(0.9137);transform-origin:0 0;">RENEDO</div>
<div class="t " style="left:797px;top:643px;letter-spacing:0.000px;word-spacing:0.743px;transform:scaleX(0.9213);transform-origin:0 0;">TAQUILLA</div>
<div class="t " style="left:1277px;top:643px;letter-spacing:0.000px;word-spacing:0.688px;transform:scaleX(0.9348);transform-origin:0 0;">NUEVA INSTALACION</div>
<div class="t " style="left:1825.1px;top:643px;letter-spacing:0.000px;word-spacing:0.836px;transform:scaleX(0.8992);transform-origin:0 0;">Si</div>
<div class="a" style="left:7px;top:682px;width:1898px;height:1px;background:#D5E2F6"></div>
<div class="a" style="left:26px;top:660px;width:1px;height:22px;background:#D5E2F6"></div>
<div class="a" style="left:313px;top:660px;width:1px;height:22px;background:#D5E2F6"></div>
<div class="a" style="left:793px;top:660px;width:1px;height:22px;background:#D5E2F6"></div>
<div class="a" style="left:1273px;top:660px;width:1px;height:22px;background:#D5E2F6"></div>
<div class="a" style="left:1753px;top:660px;width:1px;height:22px;background:#D5E2F6"></div>
<div class="t " style="left:30px;top:666px;letter-spacing:0.000px;word-spacing:0.795px;transform:scaleX(0.9088);transform-origin:0 0;">TENIS 1</div>
<div class="t " style="left:317px;top:666px;letter-spacing:0.000px;word-spacing:0.871px;transform:scaleX(0.8913);transform-origin:0 0;">PORTUGALETE</div>
<div class="t " style="left:797px;top:666px;letter-spacing:0.000px;word-spacing:0.853px;transform:scaleX(0.8952);transform-origin:0 0;">TENIS</div>
<div class="t " style="left:1277px;top:666px;letter-spacing:0.000px;word-spacing:0.861px;transform:scaleX(0.8935);transform-origin:0 0;">PISTA DE TENIS</div>
<div class="t " style="left:1825.1px;top:666px;letter-spacing:0.000px;word-spacing:0.836px;transform:scaleX(0.8992);transform-origin:0 0;">Si</div>
<div class="a" style="left:7px;top:705px;width:1898px;height:1px;background:#D5E2F6"></div>
<div class="a" style="left:26px;top:683px;width:1px;height:22px;background:#D5E2F6"></div>
<div class="a" style="left:313px;top:683px;width:1px;height:22px;background:#D5E2F6"></div>
<div class="a" style="left:793px;top:683px;width:1px;height:22px;background:#D5E2F6"></div>
<div class="a" style="left:1273px;top:683px;width:1px;height:22px;background:#D5E2F6"></div>
<div class="a" style="left:1753px;top:683px;width:1px;height:22px;background:#D5E2F6"></div>
<div class="t " style="left:30px;top:689px;letter-spacing:0.000px;word-spacing:0.795px;transform:scaleX(0.9088);transform-origin:0 0;">TENIS 2</div>
<div class="t " style="left:317px;top:689px;letter-spacing:0.000px;word-spacing:0.774px;transform:scaleX(0.9137);transform-origin:0 0;">RENEDO</div>
<div class="t " style="left:797px;top:689px;letter-spacing:0.000px;word-spacing:0.853px;transform:scaleX(0.8952);transform-origin:0 0;">TENIS</div>
<div class="t " style="left:1277px;top:689px;letter-spacing:0.000px;word-spacing:0.693px;transform:scaleX(0.9335);transform-origin:0 0;">PISCINA MUNICIPAL</div>
<div class="t " style="left:1825.1px;top:689px;letter-spacing:0.000px;word-spacing:0.836px;transform:scaleX(0.8992);transform-origin:0 0;">Si</div>
<div class="a" style="left:7px;top:728px;width:1898px;height:1px;background:#D5E2F6"></div>
<div class="a" style="left:26px;top:706px;width:1px;height:22px;background:#D5E2F6"></div>
<div class="a" style="left:313px;top:706px;width:1px;height:22px;background:#D5E2F6"></div>
<div class="a" style="left:793px;top:706px;width:1px;height:22px;background:#D5E2F6"></div>
<div class="a" style="left:1273px;top:706px;width:1px;height:22px;background:#D5E2F6"></div>
<div class="a" style="left:1753px;top:706px;width:1px;height:22px;background:#D5E2F6"></div>
<div class="t " style="left:30px;top:712px;letter-spacing:0.000px;word-spacing:0.795px;transform:scaleX(0.9088);transform-origin:0 0;">TENIS 3</div>
<div class="t " style="left:317px;top:712px;letter-spacing:0.000px;word-spacing:0.871px;transform:scaleX(0.8913);transform-origin:0 0;">PORTUGALETE</div>
<div class="t " style="left:797px;top:712px;letter-spacing:0.000px;word-spacing:0.853px;transform:scaleX(0.8952);transform-origin:0 0;">TENIS</div>
<div class="t " style="left:1277px;top:712px;letter-spacing:0.000px;word-spacing:0.835px;transform:scaleX(0.8995);transform-origin:0 0;">PISTA TENIS INTERIOR</div>
<div class="t " style="left:1822.3px;top:712px;letter-spacing:0.275px;word-spacing:0.169px;">No</div>
<div class="a" style="left:7px;top:751px;width:1898px;height:1px;background:#D5E2F6"></div>
<div class="a" style="left:26px;top:729px;width:1px;height:22px;background:#D5E2F6"></div>
<div class="a" style="left:313px;top:729px;width:1px;height:22px;background:#D5E2F6"></div>
<div class="a" style="left:793px;top:729px;width:1px;height:22px;background:#D5E2F6"></div>
<div class="a" style="left:1273px;top:729px;width:1px;height:22px;background:#D5E2F6"></div>
<div class="a" style="left:1753px;top:729px;width:1px;height:22px;background:#D5E2F6"></div>
<div class="t " style="left:30px;top:735px;letter-spacing:0.000px;word-spacing:0.795px;transform:scaleX(0.9088);transform-origin:0 0;">TENIS 4</div>
<div class="t " style="left:317px;top:735px;letter-spacing:0.000px;word-spacing:0.774px;transform:scaleX(0.9137);transform-origin:0 0;">RENEDO</div>
<div class="t " style="left:797px;top:735px;letter-spacing:0.000px;word-spacing:0.853px;transform:scaleX(0.8952);transform-origin:0 0;">TENIS</div>
<div class="t " style="left:1277px;top:735px;letter-spacing:0.000px;word-spacing:0.816px;transform:scaleX(0.9038);transform-origin:0 0;">PISTA TENIS EXTERIOR DURA</div>
<div class="t " style="left:1825.1px;top:735px;letter-spacing:0.000px;word-spacing:0.836px;transform:scaleX(0.8992);transform-origin:0 0;">Si</div>
<div class="a" style="left:26px;top:154px;width:288px;height:23px;border:2px solid #FF8A3C;border-top-width:1px"></div>
<svg style="left:12px;top:159px" width="8" height="10"><path d="M1.5 4 H3.5 V1 L7 5 L3.5 9 V6 H1.5 Z" fill="#0D2A66"/></svg>
<div class="a" style="left:562px;top:141px;width:788px;height:401px;border:1px solid #3F5F8C;border-radius:5px 5px 1px 1px;background:#BFDBFF;overflow:hidden"><div class="a" style="left:0;top:0;right:0;height:25px;border:1px solid #F7FAFF;border-bottom:none;border-radius:4px 4px 0 0"></div><div class="a" style="left:0;top:24px;right:0;height:1px;background:#A8C8F4"></div><div class="a" style="left:1px;top:1px;right:1px;height:22px;background:linear-gradient(#E6EDFC 0,#E3EBFC 5px,#C3D6FB 5px,#DDE7FB 22px)"></div><div class="a" style="left:1px;top:23px;right:1px;height:1px;background:#FFFFFF"></div></div>
<svg style="left:569px;top:147px" width="16" height="16" viewBox="0 0 16 16">
<defs><radialGradient id="ig" cx="0.5" cy="0.4" r="0.75"><stop offset="0" stop-color="#FFFFFF"/><stop offset="0.55" stop-color="#EEEDF0"/><stop offset="1" stop-color="#C6C5C9"/></radialGradient></defs>
<rect x="0" y="0" width="16" height="16" fill="url(#ig)"/>
<ellipse cx="8.2" cy="8.6" rx="6.6" ry="4.6" fill="#0B5FE0" transform="rotate(-12 8.2 8.6)"/>
<ellipse cx="7.8" cy="8.0" rx="5.0" ry="3.0" fill="#FFFFFF" transform="rotate(-12 8 8.0)"/>
<path d="M4.8 6.6 L10.2 5.9 M7.8 6.2 L6.2 9.6 M5.6 9.6 H9.8" stroke="#0B5FE0" stroke-width="1.1" fill="none"/>
<rect x="9" y="2.6" width="1.6" height="1.6" fill="#0B5FE0"/><circle cx="11.6" cy="9.4" r="0.9" fill="#0B5FE0"/>
</svg>
<div class="t " style="left:590.5px;top:149px;letter-spacing:0.025px;word-spacing:0.419px;color:#22408A;">Insertar Servicio</div>
<svg style="left:1330px;top:149px" width="12" height="11"><path d="M1.5 1.5 L9.5 8.5 M9.5 1.5 L1.5 8.5" stroke="#6E7FA0" stroke-width="1.7"/></svg>
<div class="a" style="left:577px;top:205px;width:757px;height:286px;background:#EBEFF8;border:1px solid #6E9AD6;border-radius:3px"></div>
<div class="a" style="left:579px;top:178px;width:97px;height:29px;background:linear-gradient(#F3F6FC 0,#F0F3FB 3px,#DFE8F8 6px,#EBEFF8 25px);border:1px solid #6E9AD6;border-bottom:none;border-radius:3px 3px 0 0"></div>
<div class="a" style="left:578px;top:206px;width:97px;height:2px;background:#EBEFF8"></div>
<div class="t " style="left:587.4px;top:187px;letter-spacing:0.000px;word-spacing:0.480px;transform:scaleX(0.9899);transform-origin:0 0;color:#243F7E;">Datos Generales</div>
<div class="t " style="left:684.6px;top:187px;letter-spacing:0.273px;word-spacing:0.171px;color:#243F7E;">Información</div>
<div class="t " style="left:760.6px;top:187px;letter-spacing:0.000px;word-spacing:0.770px;transform:scaleX(0.9148);transform-origin:0 0;color:#243F7E;">Plazas</div>
<div class="t " style="left:605px;top:234px;letter-spacing:0.288px;word-spacing:0.156px;color:#233E78;">Codigo *</div>
<div class="a" style="left:699px;top:230px;width:78px;height:22px;background:#FFFFFF;border:1px solid #EAE4EA;border-bottom:none"></div><div class="a" style="left:700px;top:252px;width:77px;height:1px;background:#7E7E80"></div><div class="a" style="left:701px;top:232px;width:74px;height:19px;background:#D6E6FC"></div>
<div class="t " style="left:605px;top:263px;letter-spacing:0.355px;word-spacing:0.089px;color:#233E78;">Nombre *</div>
<div class="a" style="left:699px;top:260px;width:310px;height:21px;background:#FFFFFF;border:1px solid #EAE4EA;border-bottom:none"></div><div class="a" style="left:700px;top:281px;width:309px;height:1px;background:#7E7E80"></div>
<div class="t " style="left:605px;top:293px;letter-spacing:0.022px;word-spacing:0.421px;color:#233E78;">Localización *</div>
<div class="a" style="left:699px;top:288px;width:289px;height:22px;background:#FFFFFF;border:1px solid #EAE4EA;border-bottom:none"></div><div class="a" style="left:700px;top:310px;width:288px;height:1px;background:#7E7E80"></div>
<div class="a" style="left:989px;top:289px;width:20px;height:21px;background:#FFFFFF;border:1px solid #DCD8DE;border-radius:3px"></div><svg style="left:989px;top:289px" width="20" height="21"><circle cx="8.2" cy="8.6" r="4.6" fill="none" stroke="#2B5B9B" stroke-width="1.4"/><path d="M11.4 11.8 L16.6 17" stroke="#2B5B9B" stroke-width="1.6"/></svg>
<div class="t " style="left:605px;top:322px;letter-spacing:0.224px;word-spacing:0.219px;color:#233E78;">Actividad *</div>
<div class="a" style="left:699px;top:317px;width:289px;height:22px;background:#FFFFFF;border:1px solid #EAE4EA;border-bottom:none"></div><div class="a" style="left:700px;top:339px;width:288px;height:1px;background:#7E7E80"></div>
<div class="a" style="left:989px;top:318px;width:20px;height:21px;background:#FFFFFF;border:1px solid #DCD8DE;border-radius:3px"></div><svg style="left:989px;top:318px" width="20" height="21"><circle cx="8.2" cy="8.6" r="4.6" fill="none" stroke="#2B5B9B" stroke-width="1.4"/><path d="M11.4 11.8 L16.6 17" stroke="#2B5B9B" stroke-width="1.6"/></svg>
<div class="t " style="left:605px;top:351px;letter-spacing:0.137px;word-spacing:0.306px;color:#233E78;">Instalación *</div>
<div class="a" style="left:699px;top:346px;width:289px;height:22px;background:#FFFFFF;border:1px solid #EAE4EA;border-bottom:none"></div><div class="a" style="left:700px;top:368px;width:288px;height:1px;background:#7E7E80"></div>
<div class="a" style="left:989px;top:347px;width:20px;height:21px;background:#FFFFFF;border:1px solid #DCD8DE;border-radius:3px"></div><svg style="left:989px;top:347px" width="20" height="21"><circle cx="8.2" cy="8.6" r="4.6" fill="none" stroke="#2B5B9B" stroke-width="1.4"/><path d="M11.4 11.8 L16.6 17" stroke="#2B5B9B" stroke-width="1.6"/></svg>
<div class="t " style="left:605px;top:381px;letter-spacing:0.150px;word-spacing:0.294px;color:#233E78;">Color</div>
<div class="a" style="left:698px;top:377px;width:138px;height:21px;background:#FFFFFF;border:1px solid #97B6E4"></div>
<div class="a" style="left:700px;top:379px;width:20px;height:17px;background:#FFFFFF;border:1px solid #7E98C0"></div>
<div class="a" style="left:813px;top:379px;width:21px;height:17px;background:linear-gradient(#EEF3FC 0,#E8EEFA 8px,#D9E3F4 9px,#E6EDF9 17px);border:1px solid #7F98BE;border-radius:3px"></div>
<svg style="left:813px;top:379px" width="21" height="17"><circle cx="4.6" cy="12.2" r="0.85" fill="#2A4F96"/><circle cx="10.6" cy="12.2" r="0.85" fill="#2A4F96"/><circle cx="16.6" cy="12.2" r="0.85" fill="#2A4F96"/></svg>
<div class="t " style="left:605px;top:409px;letter-spacing:0.245px;word-spacing:0.199px;color:#233E78;">Mostrar en Web</div>
<div class="a" style="left:699px;top:408px;width:13px;height:13px;background:linear-gradient(135deg,#D5D8E3,#F4F5FA);border:1px solid #254C7E"></div>
<div class="a" style="left:699px;top:432px;width:13px;height:13px;background:linear-gradient(135deg,#D5D8E3,#F4F5FA);border:1px solid #254C7E"></div>
<div class="t " style="left:715.8px;top:433px;letter-spacing:0.080px;word-spacing:0.364px;color:#233E78;">Permitir reservas sin planificación</div>
<div class="t " style="left:829.6px;top:409px;letter-spacing:0.000px;word-spacing:0.608px;transform:scaleX(0.9553);transform-origin:0 0;color:#233E78;">Ref. Reservas *</div>
<div class="a" style="left:923px;top:406px;width:86px;height:21px;background:#FFFFFF;border:1px solid #EAE4EA;border-bottom:none"></div><div class="a" style="left:924px;top:427px;width:85px;height:1px;background:#7E7E80"></div>
<div class="t " style="left:606.4px;top:459px;letter-spacing:0.085px;word-spacing:0.359px;color:#233E78;">Periodo de gracia (min.)</div>
<div class="a" style="left:923px;top:454px;width:86px;height:21px;background:#FFFFFF;border:1px solid #EAE4EA;border-bottom:none"></div><div class="a" style="left:924px;top:475px;width:85px;height:1px;background:#7E7E80"></div>
<div class="t " style="left:994.7px;top:458.5px;letter-spacing:0.000px;word-spacing:0.512px;transform:scaleX(0.9808);transform-origin:0 0;color:#1f3a73;">20</div>
<div class="a" style="left:1051px;top:221px;width:254px;height:247px;border:1px solid #97B6E4;border-radius:3px"></div>
<div class="a" style="left:1061px;top:213px;width:27px;height:16px;background:#C5DCFA"></div>
<div class="t k" style="left:1063.5px;top:216px;letter-spacing:0.025px;word-spacing:0.419px;">Foto</div>
<div class="a" style="left:1104px;top:249px;width:148px;height:166px;border:1px solid #5E5E62"></div>
<svg style="left:1104px;top:249px" width="148" height="166"><circle cx="74" cy="83" r="54.6" fill="none" stroke="#CDC9CB" stroke-width="1.2"/></svg>
<div class="t " style="left:1141.5px;top:326px;letter-spacing:0.000px;word-spacing:0.272px;transform:scaleX(0.9013);transform-origin:0 0;color:#CAC6C8;font-size:13px;">NO PICTURE</div>
<div class="a" style="left:1163px;top:437px;width:64px;height:23px;border:1px solid #7690B8;border-radius:3px;background:linear-gradient(#F0F4FC 0,#EBF0FB 45%,#D9E4F5 50%,#E4EBF8 100%)"></div>
<div class="t " style="left:1179.0px;top:442.7px;letter-spacing:0.000px;word-spacing:0.644px;transform:scaleX(0.9459);transform-origin:0 0;color:#243F7E;">Buscar</div>
<div class="a" style="left:1233px;top:437px;width:64px;height:23px;border:1px solid #7690B8;border-radius:3px;background:linear-gradient(#F0F4FC 0,#EBF0FB 45%,#D9E4F5 50%,#E4EBF8 100%)"></div>
<div class="t " style="left:1250.0px;top:442.7px;letter-spacing:0.000px;word-spacing:0.461px;transform:scaleX(0.9952);transform-origin:0 0;color:#243F7E;">Borrar</div>
<div class="a" style="left:1046px;top:509px;width:94px;height:24px;border:1px solid #7690B8;border-radius:3px;background:linear-gradient(#F0F4FC 0,#EBF0FB 45%,#D9E4F5 50%,#E4EBF8 100%)"></div>
<div class="t " style="left:1072.3px;top:515.7px;letter-spacing:0.000px;word-spacing:0.585px;transform:scaleX(0.9613);transform-origin:0 0;color:#243F7E;">Mas...</div>
<svg style="left:1128px;top:518px" width="8" height="6"><path d="M0.5 1 H6.5 L3.5 4.5 Z" fill="#0D2A66"/></svg>
<div class="a" style="left:1146px;top:509px;width:94px;height:24px;border:1px solid #7690B8;border-radius:3px;background:linear-gradient(#F0F4FC 0,#EBF0FB 45%,#D9E4F5 50%,#E4EBF8 100%)"></div>
<div class="t " style="left:1173.4px;top:515.7px;letter-spacing:0.086px;word-spacing:0.357px;color:#243F7E;">Aceptar</div>
<div class="a" style="left:1246px;top:509px;width:94px;height:24px;border:1px solid #7690B8;border-radius:3px;background:linear-gradient(#F0F4FC 0,#EBF0FB 45%,#D9E4F5 50%,#E4EBF8 100%)"></div>
<div class="t " style="left:1271.1px;top:515.7px;letter-spacing:0.000px;word-spacing:0.526px;transform:scaleX(0.9770);transform-origin:0 0;color:#243F7E;">Cancelar</div>
</body></html>
